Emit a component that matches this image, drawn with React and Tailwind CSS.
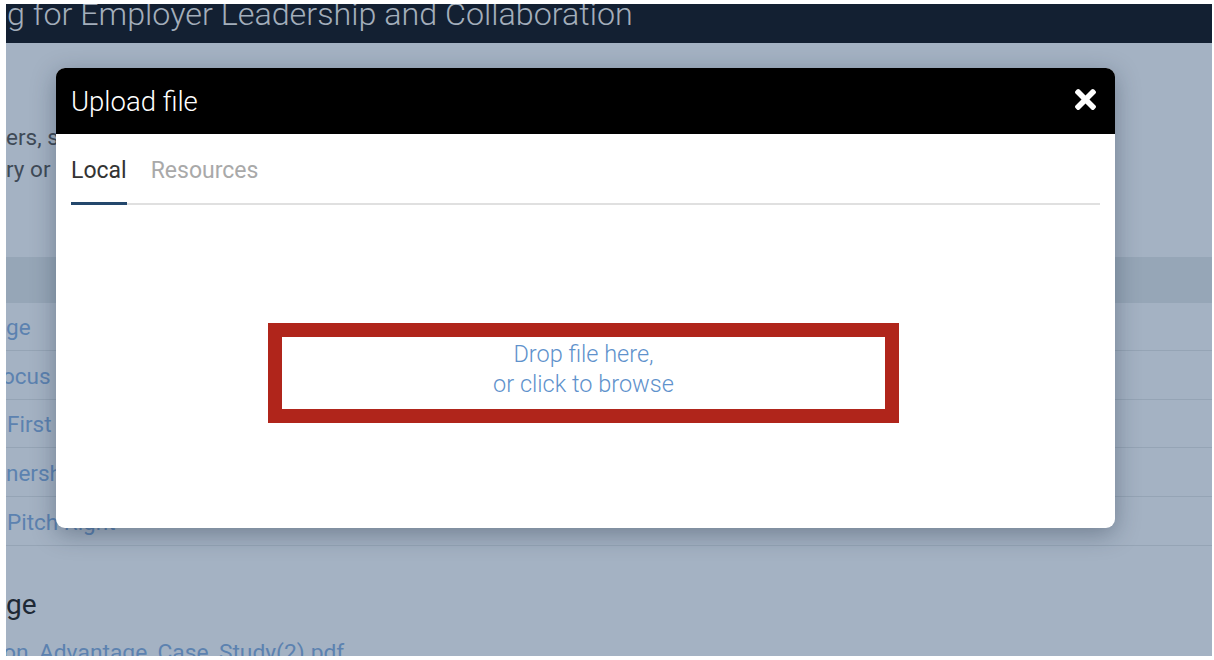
import React from 'react'

function CloseIcon() {
  return (
    <svg viewBox="0 80 352 352" className="w-[21px] h-[21px]" fill="currentColor">
      <path d="M242.72 256l100.07-100.07c12.28-12.28 12.28-32.19 0-44.48l-22.24-22.24c-12.28-12.28-32.19-12.28-44.48 0L176 189.28 75.930 89.21c-12.28-12.28-32.19-12.28-44.48 0L9.21 111.45c-12.28 12.28-12.28 32.19 0 44.48L109.28 256 9.21 356.07c-12.28 12.28-12.28 32.19 0 44.48l22.24 22.24c12.28 12.28 32.2 12.280 44.48 0L176 322.72l100.07 100.07c12.28 12.28 32.2 12.28 44.48 0l22.24-22.24c12.28-12.28 12.28-32.19 0-44.48L242.72 256z" />
    </svg>
  )
}

function UploadModal() {
  return (
    <div className="absolute left-[50px] top-[64px] w-[1059px] h-[460px] rounded-[9px] overflow-hidden bg-white shadow-[0_6px_24px_rgba(20,35,55,0.35)]">
      <div className="h-[66px] bg-black flex items-center justify-between pl-[15px] pr-[19px]">
        <h2 className="text-[27.5px] text-white leading-none font-light mt-[2px]">Upload file</h2>
        <button className="text-white mt-[-3px]">
          <CloseIcon />
        </button>
      </div>

      <div className="px-[15px]">
        <div className="pt-[22px] flex gap-[24px] border-b-2 border-[#e0e0e0]">
          <button className="text-[23px] leading-[30px] text-[#333] pb-[16px] border-b-[3px] border-[#23476c] mb-[-2px]">
            Local
          </button>
          <button className="text-[23px] leading-[30px] text-[#a9a9a9] pb-[16px] border-b-[3px] border-transparent mb-[-2px]">
            Resources
          </button>
        </div>

        <div className="mt-[118px] ml-[197px] w-[631px] h-[100px] border-[14px] border-[#b0251b] flex flex-col items-center justify-center pb-[9px] text-[23.5px] leading-[30px] font-light text-[#5f92cc]">
          <span>Drop file here,</span>
          <span>or click to browse</span>
        </div>
      </div>
    </div>
  )
}

export default function App() {
  return (
    <div className="w-[1214px] h-[660px] bg-white pt-[4px] pl-[6px] font-['Roboto','Liberation_Sans',sans-serif]">
      <div className="relative w-[1206px] h-[652px] overflow-hidden bg-[#a4b2c3]">
        <header className="h-[39px] bg-[#132032] overflow-hidden">
          <h1 className="mt-[-6px] ml-[1px] text-[32.25px] leading-[32px] font-light text-[#a3aebb] whitespace-nowrap">
            g for Employer Leadership and Collaboration
          </h1>
        </header>

        <p className="mt-[78px] text-[22.5px] leading-[32px] text-[#3f4a57] whitespace-nowrap">
          ers, staff and partners working across the industry
          <br />
          ry or&nbsp;&nbsp;organisation to build lasting connections.
        </p>

        <div className="mt-[72px]">
          <div className="h-[46px] bg-[#96a6b7]" />
          <div className="h-[48px] flex items-center pt-[3px] border-b border-[#95a4b5] text-[22.5px] text-[#5c82b0]">
            ge
          </div>
          <div className="h-[49px] flex items-center pt-[3px] border-b border-[#95a4b5] text-[22.5px] text-[#5c82b0]">
            <span className="ml-[-4px]">ocus</span>
          </div>
          <div className="h-[48px] flex items-center pt-[3px] border-b border-[#95a4b5] text-[22.5px] text-[#5c82b0]">
            <span className="ml-[1px]">First Contact</span>
          </div>
          <div className="h-[49px] flex items-center pt-[3px] border-b border-[#95a4b5] text-[22.5px] text-[#5c82b0]">
            nership Models
          </div>
          <div className="h-[49px] flex items-center pt-[3px] border-b border-[#95a4b5] text-[22.5px] text-[#5c82b0]">
            <span className="ml-[1px]">Pitch Right</span>
          </div>
        </div>

        <h3 className="mt-[42px] text-[28px] leading-[34px] text-[#1e2935]">ge</h3>
        <div className="mt-[16px] text-[22.8px] leading-[30px] text-[#5c82b0] whitespace-nowrap">
          <span className="ml-[-3px]">on_Advantage_Case_Study(2).pdf</span>
        </div>

        <UploadModal />
      </div>
    </div>
  )
}
